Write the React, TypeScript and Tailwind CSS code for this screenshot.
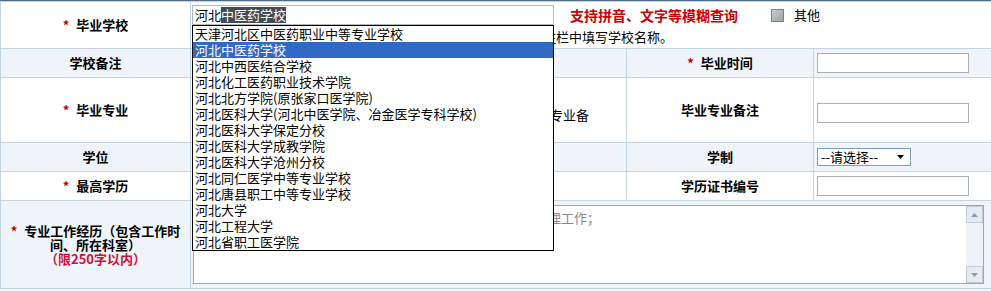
import React from "react";

const schools = [
  "天津河北区中医药职业中等专业学校",
  "河北中医药学校",
  "河北中西医结合学校",
  "河北化工医药职业技术学院",
  "河北北方学院(原张家口医学院)",
  "河北医科大学(河北中医学院、冶金医学专科学校)",
  "河北医科大学保定分校",
  "河北医科大学成教学院",
  "河北医科大学沧州分校",
  "河北同仁医学中等专业学校",
  "河北唐县职工中等专业学校",
  "河北大学",
  "河北工程大学",
  "河北省职工医学院",
];

function Star() {
  return <span className="mr-[7px] text-[#c00000]">*</span>;
}

function TextBox() {
  return <div className="h-[20px] w-[152px] border border-[#a9b0b6] bg-white" />;
}

const labelCell = "border border-[#c4d4e1] text-center align-middle font-bold text-[13px] text-black";
const valueCell = "border border-[#c4d4e1] align-middle text-[13px] text-black";

export default function App() {
  return (
    <div className="relative h-[291px] w-[991px] overflow-hidden bg-[#eef4fa] font-['Noto_Sans_CJK_SC','Noto_Sans',sans-serif] leading-[16px]">
      <div className="h-[1px] bg-[#4e6d8c]" />
      <table className="w-[991px] table-fixed border-collapse">
        <colgroup>
          <col className="w-[190px]" />
          <col className="w-[436px]" />
          <col className="w-[187px]" />
          <col className="w-[178px]" />
        </colgroup>
        <tbody>
          <tr className="h-[47px] bg-white">
            <td className={labelCell}>
              <Star />毕业学校
            </td>
            <td className={valueCell + " pl-[1px]"} colSpan={3}>
              <div className="flex items-center">
                <div className="flex h-[20px] w-[362px] items-center border border-[#b4b9be] bg-white pl-[2px]">
                  <span>河北</span>
                  <span className="bg-[#434c55] text-white">中医药学校</span>
                </div>
                <span className="ml-[16px] text-[14px] font-bold text-[#cc0000]">支持拼音、文字等模糊查询</span>
                <div className="ml-[33px] h-[13px] w-[13px] border border-[#7d8186] bg-gradient-to-br from-[#c9cdd1] to-[#9da3a8]" />
                <span className="ml-[10px]">其他</span>
              </div>
              <div className="mt-[4px]">如果下拉列表中没有您的毕业学校，请勾选其他，并在学校备注栏中填写学校名称。</div>
            </td>
          </tr>
          <tr className="h-[29px] bg-[#eef4fa]">
            <td className={labelCell}>学校备注</td>
            <td className={valueCell} />
            <td className={labelCell}>
              <Star />毕业时间
            </td>
            <td className={valueCell + " pl-[3px]"}>
              <TextBox />
            </td>
          </tr>
          <tr className="h-[65px] bg-white">
            <td className={labelCell}>
              <Star />毕业专业
            </td>
            <td className={valueCell + " pl-[3px]"}>
              <div className="h-[20px] w-[200px] border border-[#a9b0b6] bg-white" />
              <div className="mt-[5px] ml-[5px]">
                如果下拉列表中没有您所学的专业，请先勾选其他，并在毕业专业备
                <br />
                注中填写专业名称。
              </div>
            </td>
            <td className={labelCell}>毕业专业备注</td>
            <td className={valueCell + " pl-[3px] align-top pt-[25px]"}>
              <TextBox />
            </td>
          </tr>
          <tr className="h-[29px] bg-[#eef4fa]">
            <td className={labelCell}>学位</td>
            <td className={valueCell} />
            <td className={labelCell}>学制</td>
            <td className={valueCell + " pl-[3px]"}>
              <div className="flex h-[18px] w-[94px] items-center border border-[#7f9db9] bg-white pl-[3px]">
                <span className="flex-1">--请选择--</span>
                <svg width="7" height="4" viewBox="0 0 7 4" className="mr-[6px]">
                  <path d="M0 0h7L3.5 4z" fill="#000" />
                </svg>
              </div>
            </td>
          </tr>
          <tr className="h-[29px] bg-white">
            <td className={labelCell}>
              <Star />最高学历
            </td>
            <td className={valueCell} />
            <td className={labelCell}>学历证书编号</td>
            <td className={valueCell + " pl-[3px]"}>
              <TextBox />
            </td>
          </tr>
          <tr className="h-[88px] bg-[#eef4fa]">
            <td className={labelCell + " px-[4px] leading-[14px]"}>
              <Star />专业工作经历（包含工作时
              <br />
              间、所在科室）
              <br />
              <span className="text-[#d0103a]">（限250字以内）</span>
            </td>
            <td className={valueCell + " pl-[2px]"} colSpan={3}>
              <div className="flex h-[79px] w-[791px] border border-[#a5a5a5] bg-white">
                <div className="flex-1 pl-[3px] pt-[4px] text-[#8a8a8a]">
                  例：二零零八年七月至二零一二年六月在某某医院内科从事护理工作；
                </div>
                <div className="flex w-[17px] flex-col bg-[#eef3f8]">
                  <div className="flex h-[17px] items-center justify-center border border-[#c2cbd4] bg-[#e4ebf2]">
                    <svg width="7" height="4" viewBox="0 0 7 4">
                      <path d="M3.5 0L7 4H0z" fill="#8f9aa6" />
                    </svg>
                  </div>
                  <div className="flex-1" />
                  <div className="flex h-[17px] items-center justify-center border border-[#c2cbd4] bg-[#e4ebf2]">
                    <svg width="7" height="4" viewBox="0 0 7 4">
                      <path d="M0 0h7L3.5 4z" fill="#8f9aa6" />
                    </svg>
                  </div>
                </div>
              </div>
            </td>
          </tr>
        </tbody>
      </table>

      <div className="absolute left-[192px] top-[25px] w-[362px] border border-black bg-white text-[13px] leading-[16px] text-black">
        {schools.map((s, i) => (
          <div key={s} className={"h-[16px] whitespace-nowrap pl-[2px] " + (i === 1 ? "bg-[#316ac5] text-white" : "")}>
            {s}
          </div>
        ))}
      </div>
    </div>
  );
}
